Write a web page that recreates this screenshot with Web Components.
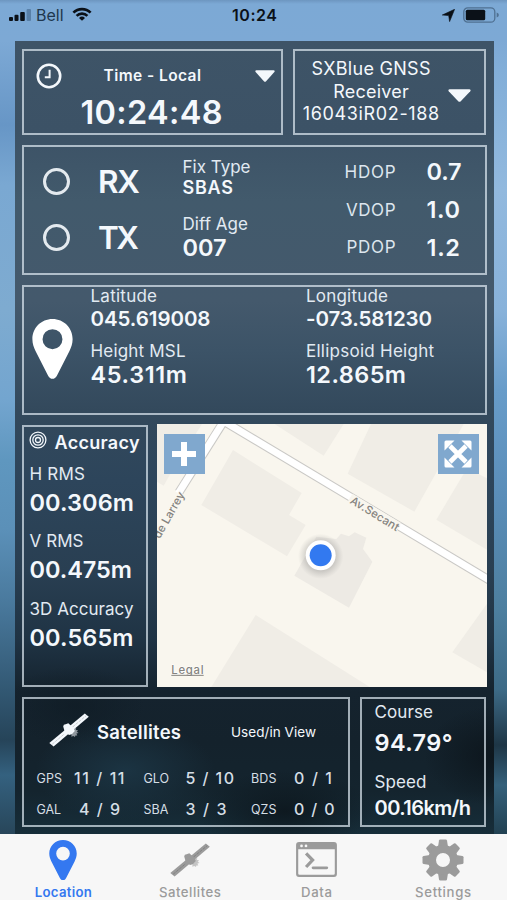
<!DOCTYPE html>
<html lang="en">
<head>
<meta charset="utf-8">
<meta name="viewport" content="width=device-width, initial-scale=1">
<title>GNSS Receiver</title>
<style>
  html, body {
    margin: 0;
    height: 100%;
    overflow: hidden;
  }
</style>
</head>
<body>
<gnss-app></gnss-app>

<script>
  const ICONS = {
    signal: `<svg viewBox="0 0 23 12" width="23" height="12">
      <rect x="0" y="8" width="4" height="4" rx="1"/>
      <rect x="5.5" y="5.7" width="4" height="6.3" rx="1"/>
      <rect x="11.2" y="3" width="4.6" height="9" rx="1"/>
      <rect x="17.6" y="0" width="4.4" height="12" rx="1" fill="#41658a" opacity=".6"/></svg>`,
    wifi: `<svg viewBox="0 0 20 14" width="20" height="14" fill="none" stroke="currentColor" stroke-width="2.7">
      <path d="M1.4 5.6a12.2 12.2 0 0 1 17.2 0"/>
      <path d="M4.6 8.9a7.7 7.7 0 0 1 10.8 0"/>
      <path d="M10 13.7 7 10.9a4.3 4.3 0 0 1 6 0z" fill="currentColor" stroke="none"/></svg>`,
    arrow: `<svg viewBox="0 0 13 13" width="13" height="13"><path d="M12.6.3 7.6 12.6 6.7 6.6.3 6z" stroke="currentColor" stroke-width=".6"/></svg>`,
    battery: `<svg viewBox="0 0 37 16" width="37" height="16">
      <rect x=".8" y=".8" width="31" height="14.4" rx="4" fill="none" stroke="#4f7091" stroke-width="1.3"/>
      <rect x="2.8" y="2.8" width="19.4" height="10.4" rx="1.5"/>
      <path d="M33.7 5.6q2.2.7 2.2 2.4t-2.2 2.4z" fill="#4f7091"/></svg>`,
    clock: `<svg viewBox="0 0 26 26" width="26" height="26" fill="none" stroke="currentColor">
      <circle cx="13" cy="13" r="11.2" stroke-width="2.6"/>
      <path d="M13.6 6.8v7.4H8.8" stroke-width="2"/></svg>`,
    caret: `<svg viewBox="0 0 22 12" width="100%" height="100%" preserveAspectRatio="none"><path d="M1.6.2h18.8c1.2 0 1.6 1 .9 1.8l-9.1 9.3c-.7.7-1.7.7-2.4 0L.7 2C0 1.2.4.2 1.6.2z"/></svg>`,
    pin: `<svg viewBox="0 0 42 61" width="100%" height="100%" preserveAspectRatio="none">
      <path fill-rule="evenodd" d="M21 0C9.400 0 .4 9 .4 20.500c0 4.700 1.500 8.300 3.200 12L16.500 57.600c2 4.200 7 4.200 9 0L38.400 32.500c1.700-3.700 3.200-7.300 3.200-12C41.600 9 32.600 0 21 0zm0 10.300a10.200 10.200 0 1 1 0 20.400 10.200 10.200 0 0 1 0-20.400z"/></svg>`,
    target: `<svg viewBox="0 0 18 18" width="18" height="18" fill="none" stroke="currentColor" stroke-width="1.3">
      <circle cx="9" cy="9" r="7.900"/><circle cx="9" cy="9" r="5.200"/><circle cx="9" cy="9" r="2.500"/></svg>`,
    satellite: `<svg viewBox="0 0 40 34" width="40" height="34">
      <path d="M.3 30L35.800.4 39.800 3.700 4.600 33.400z"/>
      <path d="M3.200 31.200L15.500 20.800M23.500 14L37.300 2.600" stroke="#000" stroke-opacity=".22" stroke-width=".8" stroke-dasharray="3 1"/>
      <path d="M14.200 13.600q.2-2.400 2.500-2.300l2.600-1 5.200 4.600 1.300 3-3 3.400-2.800.8-4.300-3.700z"/>
      <path d="M24.500 15.800l2.800-.7-.5 1.700 2.300.6-1.400 1.300 1.900 1.300-2.200.6.900 2-2-.2-.3 1.700-1.700-1.200-2 .9.500-4z" opacity=".55"/></svg>`,
    terminal: `<svg viewBox="0 0 42 36" width="41" height="35">
      <path fill-rule="evenodd" d="M3 0h36q3 0 3 3v30q0 3-3 3H3q-3 0-3-3V3q0-3 3-3zM2.200 7.500v25q0 1.300 1.300 1.300h35q1.300 0 1.300-1.300v-25z"/>
      <circle cx="5.600" cy="4" r="1.400" fill="#f7f7f7"/><circle cx="10.200" cy="4" r="1.400" fill="#f7f7f7"/>
      <path d="M10.300 11.700l6.700 6.900-6.700 7.100" fill="none" stroke="currentColor" stroke-width="3.300"/>
      <path d="M17.500 26.600h14" fill="none" stroke="currentColor" stroke-width="3" stroke-linecap="round"/></svg>`,
    gear: `<svg viewBox="-21 -21 42 42" width="42" height="42">
      <defs><path id="tooth" d="M-5-13l1-6.500q.2-1 1.300-1h5.400q1.100 0 1.300 1L5-13z"/></defs>
      <use href="#tooth"/><use href="#tooth" transform="rotate(45)"/><use href="#tooth" transform="rotate(90)"/>
      <use href="#tooth" transform="rotate(135)"/><use href="#tooth" transform="rotate(180)"/><use href="#tooth" transform="rotate(225)"/>
      <use href="#tooth" transform="rotate(270)"/><use href="#tooth" transform="rotate(315)"/>
      <circle r="11" fill="none" stroke="currentColor" stroke-width="8"/></svg>`,
    plus: `<svg viewBox="0 0 24 24" width="24" height="24"><path d="M9 0h6v9h9v6h-9v9H9v-9H0V9h9z"/></svg>`,
    expand: `<svg viewBox="0 0 28 28" width="28" height="28">
      <path d="M6 6l16 16M22 6L6 22" stroke="currentColor" stroke-width="4.600"/>
      <path d="M.5 2Q.5.500 2 .500h8.500L.5 10.500zM27.500 2q0-1.500-1.500-1.500h-8.500l10 10zM.5 26q0 1.500 1.500 1.500h8.500l-10-10zM27.500 26q0 1.500-1.500 1.500h-8.500l10-10z"/></svg>`
  };

  // Whole screen: status bar, dark dashboard, tab bar
  class GnssApp extends HTMLElement {
    constructor() {
      super();
      this.attachShadow({ mode: "open" });
    }
    getStyles() {
      return `
        <style>
        :host {
          display: flex;
          flex-direction: column;
          box-sizing: border-box;
          width: 507px;
          height: 900px;
          font-family: Inter, "Liberation Sans", sans-serif;
          color: #f4f8fc;
          background:
            linear-gradient(#6d96c0, #6d96c000 4px),
            linear-gradient(#7ca9d5 0, #7da9d5 41px, #82aed8 70px, #92b9de 190px, #88b2da 310px, #689cc9 390px, #5a8db8 500px, #4d7f9f 610px, #3d6a86 690px, #1e3646 745px, #35617b 785px, #224152 834px) right / 50% 100% no-repeat,
            linear-gradient(#7ca9d5 0, #7da9d5 41px, #6796c6 125px, #7aa8d2 185px, #7eabd0 310px, #73a5cf 400px, #5f97bf 460px, #5b90b8 530px, #4a7a9e 600px, #325873 690px, #264459 740px, #34617f 775px, #28465a 834px);
        }
        main {
          display: grid;
          grid-template-rows: 86px 130px 130px 262px 130px;
          gap: 10px;
          box-sizing: border-box;
          width: 479px;
          height: 793px;
          margin-left: 14.5px;
          padding: 8px 8px 7px 7.5px;
          background:
            radial-gradient(70px 50px at 100% 715px, #0b1319cc, #0b131900),
            radial-gradient(90px 40px at 270px 770px, #0c151bcc, #0c151b00),
            radial-gradient(90px 50px at 110px 730px, #1d3848cc, #1d384800),
            radial-gradient(70px 40px at 60px 665px, #0f1b24aa, #0f1b2400),
            linear-gradient(#3e5467 0, #3c5266 90px, #425a6c 160px, #44596c 260px, #3c5367 310px, #33495c 370px, #2d455b 440px, #293f52 530px, #1f3344 600px, #15232e 650px, #14222c 700px, #14242e 750px, #172e3a 793px);
        }
        .row {
          display: grid;
          gap: 10px;
        }
        .top { grid-template-columns: 261px 193px; }
        .middle { grid-template-columns: 125.5px 330px; gap: 9px; }
        .bottom { grid-template-columns: 328px 126px; }
        </style>
      `;
    }
    connectedCallback() {
      this.shadowRoot.innerHTML = `
        ${this.getStyles()}
        <status-bar></status-bar>
        <main>
          <div class="row top"><time-card></time-card><receiver-card></receiver-card></div>
          <link-card></link-card>
          <position-card></position-card>
          <div class="row middle"><accuracy-card></accuracy-card><map-view></map-view></div>
          <div class="row bottom"><satellite-card></satellite-card><motion-card></motion-card></div>
        </main>
        <tab-bar>
          <tab-item icon="pin" active><fit-text width="57">Location</fit-text></tab-item>
          <tab-item icon="satellite"><fit-text width="62">Satellites</fit-text></tab-item>
          <tab-item icon="terminal"><fit-text width="31">Data</fit-text></tab-item>
          <tab-item icon="gear"><fit-text width="56">Settings</fit-text></tab-item>
        </tab-bar>
      `;
    }
  }

  // Base for the outlined boxes
  class BaseCard extends HTMLElement {
    constructor() {
      super();
      this.attachShadow({ mode: "open" });
    }
    connectedCallback() {
      this.shadowRoot.innerHTML = `
        <style>
        :host {
          display: block;
          box-sizing: border-box;
          min-width: 0;
          border: 2px solid rgba(222, 234, 242, .7);
        }
        ${this.getStyles()}
        </style>
        ${this.getTemplate()}
      `;
    }
  }

  class StatusBar extends HTMLElement {
    constructor() {
      super();
      this.attachShadow({ mode: "open" });
    }
    connectedCallback() {
      this.shadowRoot.innerHTML = `
        <style>
        :host {
          display: grid;
          grid-template-columns: 1fr auto 1fr;
          align-items: center;
          height: 30px;
          padding: 0 7px 11px 9px;
          color: #0b1118;
          fill: currentColor;
          font-size: 16px;
        }
        div { display: flex; align-items: center; }
        .left svg:last-child { margin: -2px 0 0 8px; }
        .left fit-text { margin-left: 4px; color: #20374e; }
        .right { justify-content: flex-end; gap: 8px; }
        .time { font-weight: 600; }
        </style>
        <div class="left">${ICONS.signal}<fit-text width="27.5">Bell</fit-text>${ICONS.wifi}</div>
        <div class="time"><fit-text width="45">10:24</fit-text></div>
        <div class="right">${ICONS.arrow}${ICONS.battery}</div>
      `;
    }
  }

  class TimeCard extends BaseCard {
    getStyles() {
      return `
        header {
          display: grid;
          grid-template-columns: 67.5px 1fr 20px;
          align-items: center;
          height: 49px;
          padding: 0 6px 0 12px;
          font-size: 15.5px;
          font-weight: 600;
          fill: currentColor;
        }
        i { height: 12px; }
        i svg { display: block; }
        p {
          margin: 0 0 0 56.5px;
          font-size: 32.5px;
          font-weight: 600;
          line-height: 25px;
        }
      `;
    }
    getTemplate() {
      return `
        <header>${ICONS.clock}<fit-text width="97.5">Time - Local</fit-text><i>${ICONS.caret}</i></header>
        <p><fit-text width="142">10:24:48</fit-text></p>
      `;
    }
  }

  class ReceiverCard extends BaseCard {
    getStyles() {
      return `
        :host { display: flex; }
        .name {
          display: flex;
          flex-direction: column;
          align-items: center;
          width: 152px;
          padding-top: 7px;
          font-size: 18px;
          line-height: 22.6px;
        }
        i { width: 23px; height: 13px; margin: 37.5px 0 0 1px; fill: currentColor; }
        i svg { display: block; }
      `;
    }
    getTemplate() {
      return `
        <div class="name">
          <fit-text width="119">SXBlue GNSS</fit-text>
          <fit-text width="75.5">Receiver</fit-text>
          <fit-text width="136.5">16043iR02-188</fit-text>
        </div>
        <i>${ICONS.caret}</i>
      `;
    }
  }

  // Label with its reading below it
  class DataField extends HTMLElement {
    constructor() {
      super();
      this.attachShadow({ mode: "open" });
    }
    connectedCallback() {
      const attr = name => this.getAttribute(name);
      this.shadowRoot.innerHTML = `
        <style>
        :host { display: block; }
        div { display: block; white-space: nowrap; }
        .label {
          height: var(--label-height, 20px);
          font-size: var(--label-size, 17px);
          line-height: var(--label-height, 20px);
          color: #e2eaf2;
        }
        .value {
          height: var(--value-height, 27px);
          font-size: var(--value-size, 23.5px);
          line-height: var(--value-height, 27px);
          font-weight: 600;
        }
        </style>
        <div class="label"><fit-text width="${attr("label-width")}">${attr("label")}</fit-text></div>
        <div class="value"><fit-text width="${attr("value-width")}">${attr("value")}</fit-text></div>
      `;
    }
  }

  class LinkCard extends BaseCard {
    getStyles() {
      return `
        :host { display: grid; grid-template-columns: 158.5px 120px 1fr; }
        .lights {
          display: grid;
          grid-template-columns: 55.5px auto;
          grid-auto-rows: 56.5px;
          align-items: center;
          align-content: start;
          justify-content: start;
          padding: 6px 0 0 18.5px;
          font-size: 31.5px;
          font-weight: 600;
        }
        .lights i {
          box-sizing: border-box;
          width: 27px;
          height: 27px;
          border: 3px solid #f4f8fce8;
          border-radius: 50%;
        }
        .fix { padding-top: 9.5px; }
        .fix data-field + data-field { margin-top: 16px; }
        .dops {
          display: grid;
          grid-template-columns: 93px auto;
          grid-auto-rows: 37.7px;
          align-items: center;
          align-content: start;
          padding-top: 6px;
          justify-items: end;
          justify-content: start;
          font-size: 17px;
          color: #dde6ee;
        }
        .dops b { justify-self: start; margin-left: 31px; font-size: 23.5px; font-weight: 600; color: #f4f8fc; }
      `;
    }
    getTemplate() {
      return `
        <div class="lights">
          <i></i><fit-text width="42">RX</fit-text>
          <i></i><fit-text width="41">TX</fit-text>
        </div>
        <div class="fix">
          <data-field label="Fix Type" label-width="68" value="SBAS" value-width="50.5" style="--value-size:18px;--value-height:21px"></data-field>
          <data-field label="Diff Age" label-width="65.5" value="007" value-width="44"></data-field>
        </div>
        <div class="dops">
          <fit-text width="51">HDOP</fit-text><b><fit-text width="35">0.7</fit-text></b>
          <fit-text width="49.5">VDOP</fit-text><b><fit-text width="33.5">1.0</fit-text></b>
          <fit-text width="49">PDOP</fit-text><b><fit-text width="33.5">1.2</fit-text></b>
        </div>
      `;
    }
  }

  class PositionCard extends BaseCard {
    getStyles() {
      return `
        :host { display: grid; grid-template-columns: 66.5px 215.5px 1fr; }
        i { width: 41px; height: 60px; margin: 32px 0 0 8px; fill: #fff; }
        data-field { --label-height: 19px; --value-height: 28px; }
        data-field:first-child { --value-size: 20.5px; --value-height: 26px; }
        data-field + data-field { margin-top: 9.5px; }
      `;
    }
    getTemplate() {
      return `
        <i>${ICONS.pin}</i>
        <div>
          <data-field label="Latitude" label-width="66.5" value="045.619008" value-width="120"></data-field>
          <data-field label="Height MSL" label-width="95" value="45.311m" value-width="96.5"></data-field>
        </div>
        <div>
          <data-field label="Longitude" label-width="82" value="-073.581230" value-width="126"></data-field>
          <data-field label="Ellipsoid Height" label-width="128" value="12.865m" value-width="100"></data-field>
        </div>
      `;
    }
  }

  class AccuracyCard extends BaseCard {
    getStyles() {
      return `
        header {
          display: flex;
          height: 31px;
          padding-left: 4.5px;
          align-items: center;
          gap: 8px;
          font-size: 18px;
          font-weight: 600;
        }
        header svg { margin-top: -5px; }
        data-field { padding-left: 5.5px; --value-height: 38px; margin-bottom: 9.3px; }
        data-field:nth-of-type(1) { margin-top: 6px; }
      `;
    }
    getTemplate() {
      return `
        <header>${ICONS.target}<fit-text width="85">Accuracy</fit-text></header>
        <data-field label="H RMS" label-width="55.5" value="00.306m" value-width="104.5"></data-field>
        <data-field label="V RMS" label-width="54" value="00.475m" value-width="102.5"></data-field>
        <data-field label="3D Accuracy" label-width="104" value="00.565m" value-width="104"></data-field>
      `;
    }
  }

  class MapView extends HTMLElement {
    constructor() {
      super();
      this.attachShadow({ mode: "open" });
    }
    connectedCallback() {
      this.shadowRoot.innerHTML = `
        <style>
        :host { display: grid; height: 263px; margin-top: -1px; background: #f9f6ee; overflow: hidden; }
        .map, .controls { grid-area: 1 / 1; }
        .map { width: 330px; height: 263px; display: block; }
        .controls {
          display: flex;
          justify-content: space-between;
          align-items: flex-start;
          padding: 9.5px 8px 0 7px;
          z-index: 1;
        }
        button {
          display: grid;
          place-items: center;
          width: 41px;
          height: 40px;
          padding: 0;
          border: 0;
          color: #fff;
          fill: currentColor;
          background: #80a8ce;
        }
        text { font-family: Inter, sans-serif; font-weight: 500; fill: #85837f; }
        </style>
        <svg class="map" viewBox="22 27 990 789" preserveAspectRatio="none">
          <defs>
            <radialGradient id="glow"><stop offset=".5" stop-color="#555" stop-opacity=".35"/><stop offset="1" stop-color="#777" stop-opacity="0"/></radialGradient>
          </defs>
          <g fill="#f0ede6">
            <path d="M250 105L456 234 418 300 468 330 412 424 155 270z"/>
            <path d="M375 27L582 27 522 122z"/>
            <path d="M664 27H942L794 290 594 176z"/>
            <path d="M952 160L1012 190V404L860 314z"/>
            <path d="M22 27h135L60 180 42 212 22 200z"/>
            <path d="M318 600L660 816H185z"/>
            <path d="M1012 566V772L908 712z"/>
          </g>
          <path d="M434 482L500 365 560 372 574 356 598 364 615 352 650 368 640 402 668 440 598 578z" fill="#edeae4"/>
          <g fill="none">
            <path d="M218 26L88 232" stroke="#c9c8c5" stroke-width="27"/>
            <path d="M218 16L1030 502" stroke="#c9c8c5" stroke-width="27"/>
            <path d="M220 22L86 235" stroke="#fff" stroke-width="21"/>
            <path d="M218 16L1030 502" stroke="#fff" stroke-width="21"/>
          </g>
          <path d="M600 250L746 338" stroke="#f9f6ee" stroke-width="32"/>
          <text transform="translate(599 263) rotate(31.5)" font-size="34" textLength="165" stroke="#f9f6ee" stroke-width="5" paint-order="stroke">Av.Secant</text>
          <text transform="translate(30 373) rotate(-60.5)" font-size="34" textLength="154" stroke="#f9f6ee" stroke-width="5" paint-order="stroke">de Larrey</text>
          <circle cx="513" cy="424" r="68" fill="url(#glow)"/>
          <circle cx="513" cy="421" r="45" fill="#fff"/>
          <circle cx="513" cy="421" r="33" fill="#3279f0"/>
          <text x="65" y="776" font-size="34" textLength="97" stroke="#fff" stroke-width="3" paint-order="stroke">Legal</text>
          <path d="M65 781H162" stroke="#85837f" stroke-width="3"/>
        </svg>
        <div class="controls">
          <button aria-label="Zoom in">${ICONS.plus}</button>
          <button aria-label="Full screen">${ICONS.expand}</button>
        </div>
      `;
    }
  }

  class SatelliteCard extends BaseCard {
    getStyles() {
      return `
        header {
          display: grid;
          grid-template-columns: 47px 134px auto;
          align-items: center;
          justify-content: start;
          height: 65px;
          padding-left: 26px;
          fill: currentColor;
        }
        header svg { margin: -4px 0 0 -1px; }
        header b { font-size: 18.5px; font-weight: 600; }
        header span { font-size: 13.5px; }
        .counts {
          display: grid;
          grid-template-columns: 37.5px 69.5px 42px 65.5px 43px auto;
          grid-auto-rows: 31px;
          align-items: center;
          justify-content: start;
          margin-top: -1.5px;
          padding-left: 12.5px;
          font-size: 12.5px;
          color: #d5dee5;
        }
        .counts b { font-size: 16px; font-weight: 500; }
        .counts .mid { margin-left: 5px; }
      `;
    }
    getTemplate() {
      return `
        <header>${ICONS.satellite}<b><fit-text width="84">Satellites</fit-text></b><span><fit-text width="85">Used/in View</fit-text></span></header>
        <div class="counts">
          <fit-text width="25.5">GPS</fit-text><b><fit-text width="50.5">11 / 11</fit-text></b>
          <fit-text width="25.5">GLO</fit-text><b><fit-text width="48.5">5 / 10</fit-text></b>
          <fit-text width="25.5">BDS</fit-text><b><fit-text width="38">0 / 1</fit-text></b>
          <fit-text width="24.5">GAL</fit-text><b class="mid"><fit-text width="41">4 / 9</fit-text></b>
          <fit-text width="25">SBA</fit-text><b><fit-text width="41">3 / 3</fit-text></b>
          <fit-text width="25.5">QZS</fit-text><b><fit-text width="40.5">0 / 0</fit-text></b>
        </div>
      `;
    }
  }

  class MotionCard extends BaseCard {
    getStyles() {
      return `
        :host { padding: 2.5px 0 0 12.5px; }
        data-field:first-of-type { --value-height: 41px; margin-bottom: 9px; }
        data-field:last-of-type { --value-size: 20px; --value-height: 33px; }
      `;
    }
    getTemplate() {
      return `
        <data-field label="Course" label-width="58.5" value="94.79°" value-width="78"></data-field>
        <data-field label="Speed" label-width="52" value="00.16km/h" value-width="96.5"></data-field>
      `;
    }
  }

  class TabBar extends HTMLElement {
    constructor() {
      super();
      this.attachShadow({ mode: "open" });
    }
    connectedCallback() {
      this.shadowRoot.innerHTML = `
        <style>
        :host {
          display: grid;
          grid-template-columns: repeat(4, 126.6px);
          flex: 1;
          background: #f7f7f7;
        }
        </style>
        <slot></slot>
      `;
    }
  }

  class TabItem extends HTMLElement {
    constructor() {
      super();
      this.attachShadow({ mode: "open" });
    }
    connectedCallback() {
      const icon = this.getAttribute("icon");
      this.shadowRoot.innerHTML = `
        <style>
        :host {
          display: flex;
          flex-direction: column;
          align-items: center;
          color: #9b9b9b;
          fill: currentColor;
          font-size: 13.2px;
          font-weight: 500;
          line-height: 14px;
        }
        :host([active]) { color: #3478f0; font-weight: 600; }
        i { display: grid; place-items: center; height: 51px; }
        .pin { box-sizing: border-box; width: 28px; padding: 5.5px 0 5px; }
        </style>
        <i class="${icon}">${ICONS[icon]}</i>
        <slot></slot>
      `;
    }
  }

  // Spaces its letters so that the line takes the given width
  class FitText extends HTMLElement {
    constructor() {
      super();
      this.attachShadow({ mode: "open" });
      this.shadowRoot.innerHTML = `<style>:host { display: inline-block; vertical-align: top; white-space: nowrap; }</style><span><slot></slot></span>`;
    }
    connectedCallback() {
      const span = this.shadowRoot.querySelector("span");
      const width = parseFloat(this.getAttribute("width"));
      const natural = span.getBoundingClientRect().width;
      const count = this.textContent.length;
      if (!width || !natural || count < 2) return;
      const spacing = (width - natural) / (count - 1);
      span.style.letterSpacing = spacing + "px";
      this.style.width = width + "px";
    }
  }

  customElements.define("gnss-app", GnssApp);
  customElements.define("status-bar", StatusBar);
  customElements.define("time-card", TimeCard);
  customElements.define("receiver-card", ReceiverCard);
  customElements.define("link-card", LinkCard);
  customElements.define("position-card", PositionCard);
  customElements.define("accuracy-card", AccuracyCard);
  customElements.define("map-view", MapView);
  customElements.define("satellite-card", SatelliteCard);
  customElements.define("motion-card", MotionCard);
  customElements.define("data-field", DataField);
  customElements.define("tab-bar", TabBar);
  customElements.define("tab-item", TabItem);
  // last, since it measures text inside the finished layout
  customElements.define("fit-text", FitText);
</script>
</body>
</html>
